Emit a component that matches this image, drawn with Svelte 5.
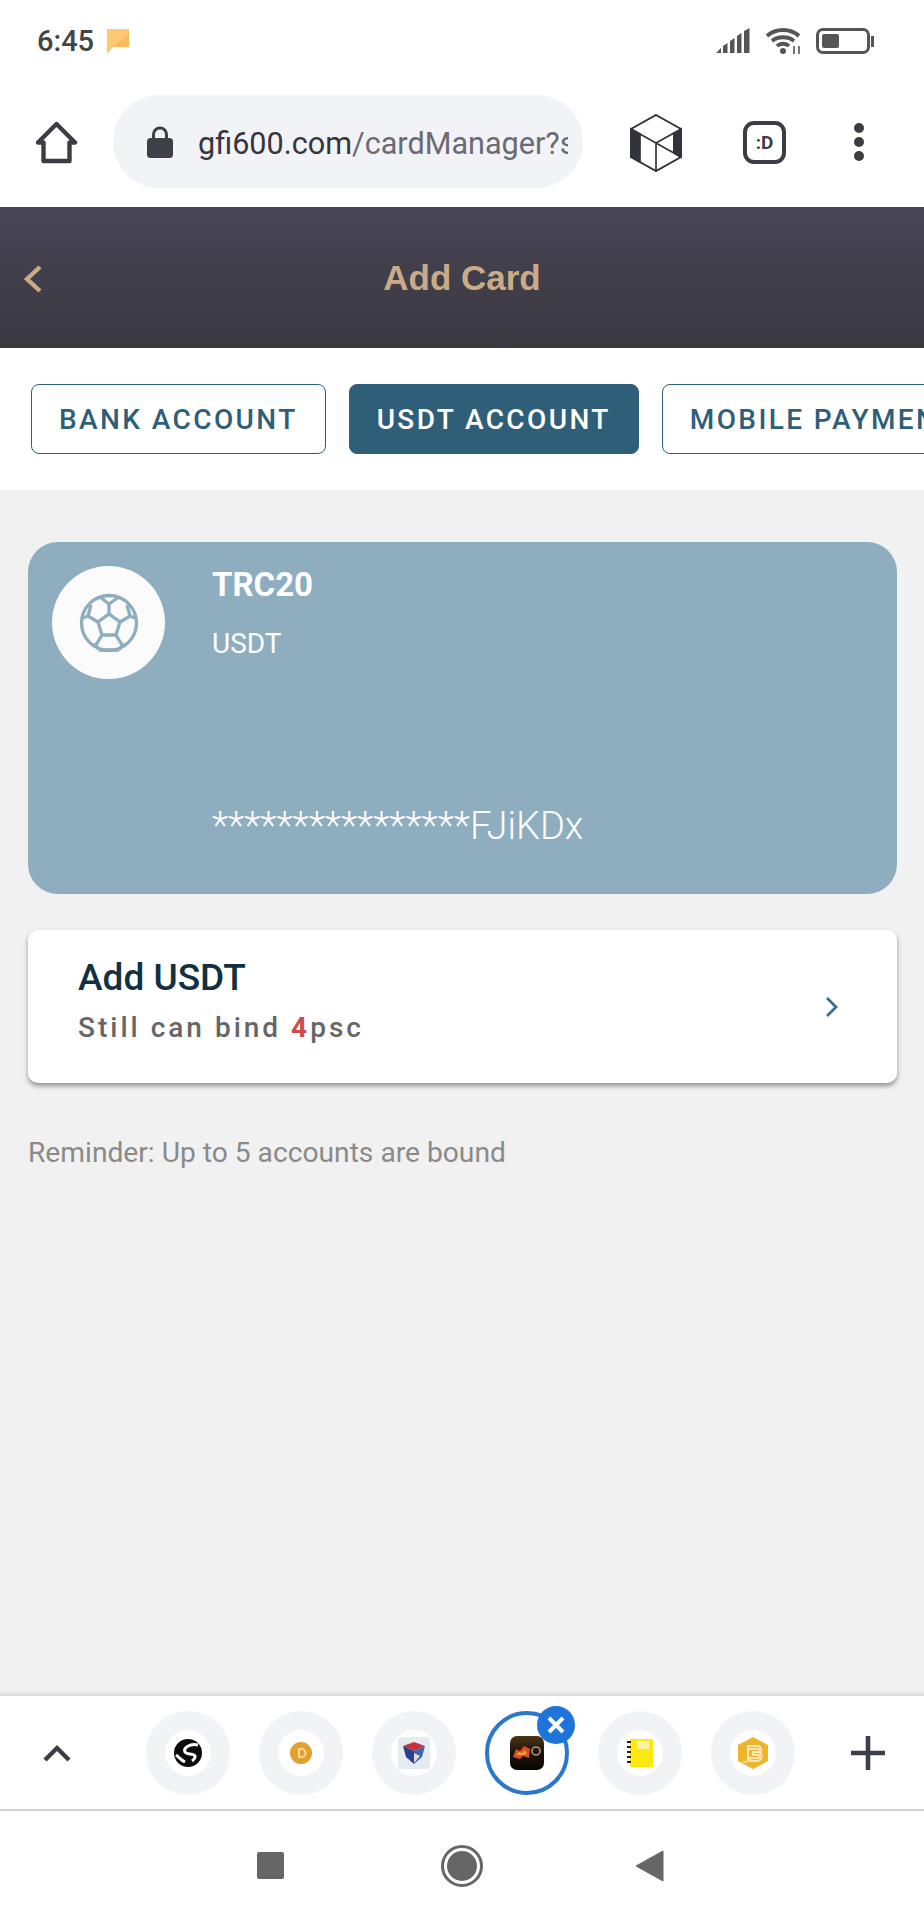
<script>
  const tabs = [
    { label: 'BANK ACCOUNT', active: false },
    { label: 'USDT ACCOUNT', active: true },
    { label: 'MOBILE PAYMENT', active: false }
  ];
</script>

<div class="page">
  <div class="status-bar">
    <span class="time">6:45</span>
    <svg class="note" width="24" height="26" viewBox="0 0 24 26">
      <path d="M1 1h22v18H7l-5 6H1z" fill="#fdc873" />
      <path d="M23 5v14H8z" fill="#f9b95c" />
    </svg>
    <div class="status-right">
      <svg width="36" height="26" viewBox="0 0 36 26" fill="#555">
        <path d="M0 25l5-5v5zM7 18l4.500-3v10H7zM14 13l4.500-3v15H14zM21 8l4.500-3v20H21zM28 3l5.500-3v25H28z" />
      </svg>
      <svg width="38" height="27" viewBox="0 0 38 27" fill="none" stroke="#555" stroke-width="3.800">
        <path d="M2 8c9-8 23-8 32 0" />
        <path d="M7 13c6-5 16-5 22 0" />
        <path d="M12 18c3-3 9-3 12 0" />
        <circle cx="18" cy="23" r="3" fill="#555" stroke="none" />
        <path d="M29 18v8M34 18v8" stroke-width="1.600" />
      </svg>
      <div class="battery"><div class="battery-fill"></div></div>
      <div class="battery-nub"></div>
    </div>
  </div>

  <div class="toolbar">
    <svg class="home" width="43" height="43" viewBox="0 0 43 43" fill="none" stroke="#3c3c44" stroke-width="4.400" stroke-linejoin="round">
      <path d="M3 21.500L21.500 3 40 21.500h-5.500V40h-26V21.500z" />
    </svg>
    <div class="url-pill">
      <svg width="26" height="32" viewBox="0 0 26 32">
        <path d="M6.500 13V8.500a6.500 6.500 0 0 1 13 0V13" fill="none" stroke="#3f3f47" stroke-width="3" />
        <rect x="0" y="12" width="26" height="20" rx="3.500" fill="#3f3f47" />
      </svg>
      <div class="url"><span class="domain">gfi600.com</span>/cardManager?s</div>
    </div>
    <svg class="box" width="54" height="58" viewBox="0 0 54 58" fill="none" stroke="#33333b" stroke-width="1.700">
      <path d="M27 1L52 15V43L27 57 2 43V15z" fill="#fff" stroke-width="2" />
      <path d="M2 15L11 20V48L2 43z M52 15L45 19V39L52 43z" fill="#33333b" />
      <path d="M2 15L52 43 M27 57V28 M27 29L45 19V39" />
    </svg>
    <div class="tab-count"><span>:D</span></div>
    <div class="menu-dots"><i></i><i></i><i></i></div>
  </div>

  <div class="app-header">
    <svg class="back" width="20" height="28" viewBox="0 0 20 28" fill="none" stroke="#c9ac87" stroke-width="4.400">
      <path d="M17 2L4 14l13 12" />
    </svg>
    <h1>Add Card</h1>
  </div>

  <div class="tabs">
    {#each tabs as tab}
      <div class="tab" class:active={tab.active}>{tab.label}</div>
    {/each}
  </div>

  <div class="content">
    <div class="usdt-card">
      <div class="coin">
        <svg width="60" height="60" viewBox="0 0 60 60" fill="none" stroke="#8eadbf" stroke-width="3.300">
          <circle cx="30" cy="30" r="27.500" />
          <path d="M30 21l11 8-4 13H23l-4-13z" />
          <path d="M30 21V11l-9-7M30 11l10-7M41 29l10-6 5 2M51 23l-3-11M19 29L9 23 4 25M9 23l3-11M37 42l6 10-3 5M23 42l-6 10 3 5M17 52h-3M43 52h3M20 57h20" />
        </svg>
      </div>
      <div class="card-text">
        <div class="card-title">TRC20</div>
        <div class="card-type">USDT</div>
        <div class="card-number">****************FJiKDx</div>
      </div>
    </div>

    <div class="add-row">
      <div class="add-text">
        <div class="add-title">Add USDT</div>
        <div class="add-sub">Still can bind <b>4</b>psc</div>
      </div>
      <svg width="14" height="22" viewBox="0 0 14 22" fill="none" stroke="#3a6f8e" stroke-width="2.800">
        <path d="M2 2l9 9-9 9" />
      </svg>
    </div>

    <p class="reminder">Reminder: Up to 5 accounts are bound</p>
  </div>

  <div class="shortcuts">
    <svg class="chev-up" width="30" height="20" viewBox="0 0 30 20" fill="none" stroke="#3c3c44" stroke-width="4.400">
      <path d="M3 17L15 5l12 12" />
    </svg>
    <div class="bubbles">
      <div class="bubble">
        <div class="inner">
          <svg width="28" height="28" viewBox="0 0 28 28" fill="none" stroke="#fff" stroke-width="3">
            <circle cx="14" cy="14" r="14" fill="#0c0c0c" stroke="none" />
            <path d="M24 6C16 4 9 9 11 13c2 3 6 1 9 3 2 1 1 4-2 6" />
            <path d="M2 16c3 2 5 5 9 7" />
          </svg>
        </div>
      </div>
      <div class="bubble">
        <div class="inner">
          <svg width="28" height="28" viewBox="0 0 28 28">
            <circle cx="14" cy="14" r="11" fill="#e2a02f" />
            <path d="M11 9h3.500a5 5 0 0 1 0 10H11zM13 11v6h1.500a3 3 0 0 0 0-6z" fill="#f8dc9c" />
          </svg>
        </div>
      </div>
      <div class="bubble">
        <div class="inner">
          <svg width="32" height="32" viewBox="0 0 32 32">
            <rect width="32" height="32" rx="3" fill="#e4ecf2" />
            <path d="M5 9l11-4 11 4-11 5z" fill="#c8303a" />
            <path d="M5 9l11 5v13L8 20z" fill="#27408f" />
            <path d="M27 9l-11 5v13l8-7z" fill="#3f63b5" />
            <path d="M16 16l6 3-6 7z" fill="#e4ddcc" />
          </svg>
        </div>
      </div>
      <div class="bubble selected">
        <svg width="34" height="34" viewBox="0 0 34 34">
          <defs>
            <linearGradient id="flame" x1="0" y1="0" x2="0" y2="1">
              <stop offset="0" stop-color="#4a3415" />
              <stop offset="0.5" stop-color="#1e1208" />
              <stop offset="1" stop-color="#070504" />
            </linearGradient>
          </defs>
          <rect width="34" height="34" rx="7" fill="url(#flame)" />
          <path d="M3 21l3-8 4 2 4-5 6 3-1 9-6-2-3 3z" fill="#d9501c" />
          <path d="M6 19l3-3 3 1 3-3 2 4-5 1z" fill="#f2a13a" />
          <circle cx="26" cy="15" r="4" fill="none" stroke="#a89a80" stroke-width="1.600" />
        </svg>
        <div class="close">
          <svg width="20" height="20" viewBox="0 0 20 20" stroke="#fff" stroke-width="4">
            <path d="M3 3l14 14M17 3L3 17" />
          </svg>
        </div>
      </div>
      <div class="bubble">
        <div class="inner">
          <svg width="26" height="30" viewBox="0 0 26 30">
            <rect x="3" y="1" width="23" height="28" rx="1" fill="#fde910" />
            <rect x="10" y="3" width="12" height="8" fill="#fdf6a0" />
            <path d="M0 4h4M0 9h4M0 14h4M0 19h4M0 24h4" stroke="#222" stroke-width="2" />
          </svg>
        </div>
      </div>
      <div class="bubble">
        <div class="inner">
          <svg width="34" height="34" viewBox="0 0 34 34">
            <path d="M17 1l15 8v16l-15 8-15-8V9z" fill="#edb52c" />
            <path d="M12 10h10a4 4 0 0 1 2 7 4.500 4.500 0 0 1-2 8H14v-3h8a1.500 1.500 0 0 0 0-3h-5v-3h5a1.500 1.500 0 0 0 0-3H12zM12 14v10a3 3 0 0 1-5 1" fill="none" stroke="#fbe9b8" stroke-width="1.800" />
          </svg>
        </div>
      </div>
    </div>
    <svg class="plus" width="34" height="34" viewBox="0 0 34 34" stroke="#3c3f4a" stroke-width="4.600">
      <path d="M0 17h34M17 0v34" />
    </svg>
  </div>

  <div class="nav-bar">
    <div class="nav-square"></div>
    <div class="nav-circle"><div></div></div>
    <svg width="28" height="32" viewBox="0 0 28 32"><path d="M0 16L27 1v30z" fill="#666" stroke="#666" stroke-linejoin="round" /></svg>
  </div>
</div>

<style>
  :global(body) {
    margin: 0;
    background: #fff;
  }

  .page {
    width: 924px;
    height: 1920px;
    display: flex;
    flex-direction: column;
    overflow: hidden;
    font-family: Roboto, 'Liberation Sans', sans-serif;
  }

  .status-bar {
    height: 82px;
    padding: 0 50px 0 37px;
    box-sizing: border-box;
    display: flex;
    align-items: center;
    gap: 12px;
    flex-shrink: 0;
  }

  .time {
    font-size: 29px;
    font-weight: 500;
    color: #444;
  }

  .status-right {
    margin-left: auto;
    display: flex;
    align-items: center;
    gap: 13px;
  }

  .battery {
    width: 54px;
    height: 26px;
    border: 3.5px solid #555;
    border-radius: 7px;
    padding: 3px;
    box-sizing: border-box;
  }

  .battery-fill {
    width: 17px;
    height: 100%;
    background: #555;
    border-radius: 2px;
  }

  .battery-nub {
    width: 3px;
    height: 11px;
    background: #555;
    margin-left: -12px;
  }

  .toolbar {
    height: 125px;
    display: flex;
    align-items: flex-start;
    flex-shrink: 0;
  }

  .home {
    margin: 39px 0 0 35px;
  }

  .url-pill {
    margin: 13px 0 0 35px;
    width: 470px;
    height: 93px;
    box-sizing: border-box;
    padding: 0 15px 0 34px;
    border-radius: 47px;
    background: #f2f3f7;
    display: flex;
    align-items: center;
    gap: 25px;
  }

  .url {
    padding-top: 3px;
    font-size: 30.6px;
    color: #6a6a72;
    white-space: nowrap;
    overflow: hidden;
    flex: 1;
  }

  .domain {
    color: #35353c;
  }

  .box {
    margin: 32px 0 0 46px;
  }

  .tab-count {
    margin: 39px 0 0 60px;
    width: 43px;
    height: 43px;
    box-sizing: border-box;
    border: 4.5px solid #3c3c44;
    border-radius: 11px;
    display: flex;
    align-items: center;
    justify-content: center;
    font-size: 19px;
    font-weight: 700;
    color: #3c3c44;
  }

  .menu-dots {
    margin: 41px 0 0 68px;
    display: flex;
    flex-direction: column;
    gap: 4px;
  }

  .menu-dots i {
    width: 10px;
    height: 10px;
    border-radius: 50%;
    background: #3c3c44;
  }

  .app-header {
    height: 141px;
    flex-shrink: 0;
    background: linear-gradient(#484556, #3a383f);
    display: flex;
    align-items: center;
    justify-content: center;
    position: relative;
  }

  .back {
    position: absolute;
    left: 23px;
    top: 58px;
  }

  h1 {
    margin: 0;
    font-family: 'Liberation Sans', Arial, sans-serif;
    font-size: 35px;
    font-weight: 700;
    color: #c9ac87;
  }

  .tabs {
    height: 142px;
    flex-shrink: 0;
    background: #fff;
    padding: 36px 0 0 31px;
    box-sizing: border-box;
    display: flex;
    align-items: flex-start;
    gap: 23px;
    overflow: hidden;
  }

  .tab {
    height: 70px;
    padding: 0 27px;
    box-sizing: border-box;
    flex-shrink: 0;
    display: flex;
    align-items: center;
    border: 1.5px solid #2f5f78;
    border-radius: 8px;
    font-size: 28px;
    font-weight: 500;
    letter-spacing: 2.4px;
    color: #2f5f78;
    white-space: nowrap;
  }

  .tab.active {
    background: #2f5f78;
    color: #fff;
  }

  .content {
    flex: 1;
    background: #f1f1f1;
    padding: 52px 27px 0 28px;
    box-shadow: inset 0 -6px 6px -6px rgba(0, 0, 0, 0.2);
  }

  .usdt-card {
    height: 352px;
    box-sizing: border-box;
    padding: 24px;
    border-radius: 30px;
    background: #8eadbf;
    display: flex;
    gap: 47px;
    color: #fff;
  }

  .coin {
    width: 113px;
    height: 113px;
    border-radius: 50%;
    background: #fbfbfb;
    display: flex;
    align-items: center;
    justify-content: center;
    flex-shrink: 0;
  }

  .card-text {
    display: flex;
    flex-direction: column;
  }

  .card-title {
    font-size: 33px;
    font-weight: 700;
    line-height: 38px;
  }

  .card-type {
    margin-top: 21px;
    font-size: 28px;
    line-height: 38px;
  }

  .card-number {
    margin-top: 141px;
    font-size: 38px;
    line-height: 44px;
    font-weight: 300;
  }

  .add-row {
    margin-top: 36px;
    height: 153px;
    box-sizing: border-box;
    padding: 0 58px 0 50px;
    background: #fff;
    border-radius: 10px;
    box-shadow: 0 3px 5px rgba(0, 0, 0, 0.4);
    display: flex;
    align-items: center;
    justify-content: space-between;
  }

  .add-text {
    margin-bottom: 12px;
  }

  .add-title {
    font-size: 37px;
    font-weight: 500;
    line-height: 44px;
    color: #12303f;
  }

  .add-sub {
    margin-top: 10px;
    font-size: 28px;
    letter-spacing: 3px;
    line-height: 36px;
    color: #666;
    font-weight: 500;
  }

  .add-sub b {
    color: #d04a4a;
    font-weight: 700;
  }

  .reminder {
    margin: 52px 0 0;
    font-size: 28.2px;
    line-height: 36px;
    color: #8a8a8a;
  }

  .shortcuts {
    height: 113px;
    flex-shrink: 0;
    background: #fff;
    border-bottom: 2px solid #d0d0d0;
    display: flex;
    align-items: center;
  }

  .chev-up {
    margin-left: 42px;
  }

  .bubbles {
    margin-left: 74px;
    display: flex;
    gap: 29px;
  }

  .bubble {
    width: 84px;
    height: 84px;
    border-radius: 50%;
    background: #f2f3f7;
    display: flex;
    align-items: center;
    justify-content: center;
    position: relative;
  }

  .inner {
    width: 46px;
    height: 46px;
    border-radius: 50%;
    background: #fff;
    display: flex;
    align-items: center;
    justify-content: center;
  }

  .bubble.selected {
    background: #fff;
    box-sizing: border-box;
    border: 4px solid #2a78cc;
  }

  .close {
    position: absolute;
    top: -9px;
    right: -10px;
    width: 38px;
    height: 38px;
    border-radius: 50%;
    background: #1f74dc;
    display: flex;
    align-items: center;
    justify-content: center;
  }

  .plus {
    margin-left: 56px;
  }

  .nav-bar {
    height: 109px;
    flex-shrink: 0;
    background: #fff;
    display: flex;
    align-items: center;
    padding-left: 257px;
  }

  .nav-square {
    width: 27px;
    height: 27px;
    background: #666;
    border-radius: 2px;
  }

  .nav-circle {
    margin: 0 153px 0 157px;
    width: 42px;
    height: 42px;
    box-sizing: border-box;
    border: 3px solid #666;
    border-radius: 50%;
    padding: 3px;
  }

  .nav-circle div {
    width: 100%;
    height: 100%;
    border-radius: 50%;
    background: #666;
  }
</style>
